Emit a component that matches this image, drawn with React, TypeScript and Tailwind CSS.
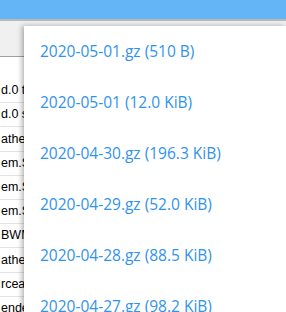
import React from 'react';

const rows = [
  'd.0 test',
  'd.0 shell',
  'athername',
  'em.Shell',
  'em.Shell',
  'em.Shell',
  'BWMedia',
  'athername',
  'rceapp',
  'endeavor',
];

const files = [
  '2020-05-01.gz (510 B)',
  '2020-05-01 (12.0 KiB)',
  '2020-04-30.gz (196.3 KiB)',
  '2020-04-29.gz (52.0 KiB)',
  '2020-04-28.gz (88.5 KiB)',
  '2020-04-27.gz (98.2 KiB)',
];

export default function App() {
  return (
    <div
      className="relative w-[286px] h-[312px] overflow-hidden bg-white"
      style={{ fontFamily: '"Open Sans", "Noto Sans", sans-serif' }}
    >
      <div className="h-[19px] bg-[#64b5f6]" />
      <div className="h-[2px] bg-[#b8b8b8]" />
      <div className="h-[36px] bg-[#f0f0f0] border-b border-[#a0a0a0]" />
      <div className="h-[22px] bg-white" />

      <div className="flex flex-col w-[24px] overflow-hidden">
        {rows.map((row, i) => (
          <div
            key={i}
            className="h-[24.2px] flex items-center border-b border-[#e3e3e3] bg-white text-[12.5px] text-black whitespace-nowrap pl-[1px] overflow-hidden"
            style={{ fontFamily: '"Liberation Sans", Arial, sans-serif' }}
          >
            {row}
          </div>
        ))}
      </div>

      <div className="absolute left-[24px] top-[26px] right-0 bottom-0 bg-white shadow-[-2px_0_5px_rgba(0,0,0,0.3)]">
        <div className="flex flex-col">
          {files.map((file, i) => (
            <div
              key={i}
              className="h-[51px] flex items-center px-4 text-[15.5px] text-[#3193ee] whitespace-nowrap"
            >
              {file}
            </div>
          ))}
        </div>
      </div>
    </div>
  );
}
